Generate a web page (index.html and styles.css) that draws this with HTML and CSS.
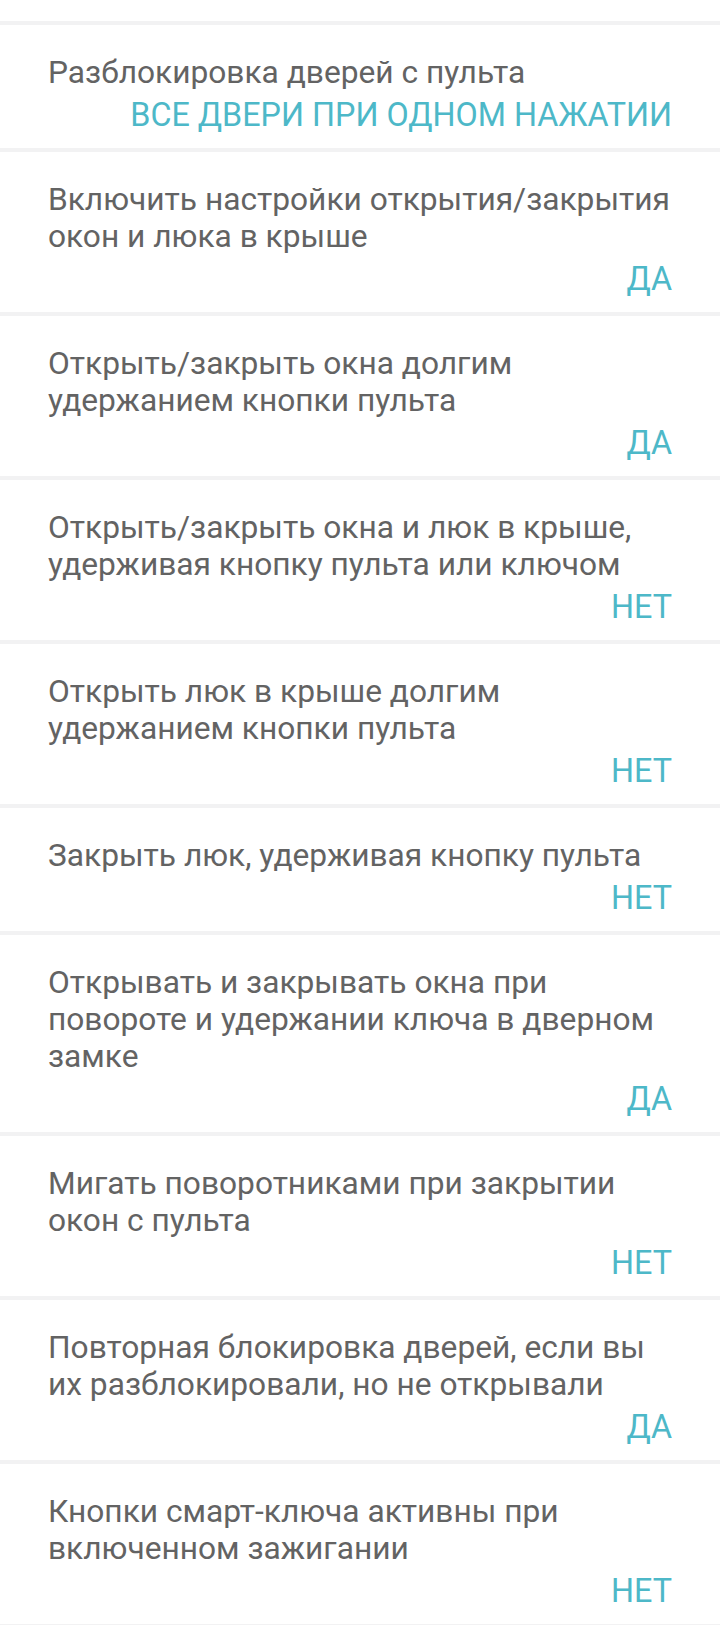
FILE: index.html
```html
<!DOCTYPE html>
<html lang="ru">
<head>
  <meta charset="UTF-8">
  <title>Настройки дверей и окон</title>
  <link rel="stylesheet" href="styles.css">
</head>
<body>

<main class="settings">
  <div class="row-tail"></div>

  <div class="setting">
    <div class="setting-title">Разблокировка дверей с пульта</div>
    <div class="setting-value">ВСЕ ДВЕРИ ПРИ ОДНОМ НАЖАТИИ</div>
  </div>

  <div class="setting">
    <div class="setting-title">Включить настройки открытия/закрытия окон и люка в крыше</div>
    <div class="setting-value">ДА</div>
  </div>

  <div class="setting">
    <div class="setting-title">Открыть/закрыть окна долгим удержанием кнопки пульта</div>
    <div class="setting-value">ДА</div>
  </div>

  <div class="setting">
    <div class="setting-title">Открыть/закрыть окна и люк в крыше, удерживая кнопку пульта или ключом</div>
    <div class="setting-value">НЕТ</div>
  </div>

  <div class="setting">
    <div class="setting-title">Открыть люк в крыше долгим удержанием кнопки пульта</div>
    <div class="setting-value">НЕТ</div>
  </div>

  <div class="setting">
    <div class="setting-title">Закрыть люк, удерживая кнопку пульта</div>
    <div class="setting-value">НЕТ</div>
  </div>

  <div class="setting">
    <div class="setting-title">Открывать и закрывать окна при повороте и удержании ключа в дверном замке</div>
    <div class="setting-value">ДА</div>
  </div>

  <div class="setting">
    <div class="setting-title">Мигать поворотниками при закрытии окон с пульта</div>
    <div class="setting-value">НЕТ</div>
  </div>

  <div class="setting">
    <div class="setting-title">Повторная блокировка дверей, если вы их разблокировали, но не открывали</div>
    <div class="setting-value">ДА</div>
  </div>

  <div class="setting">
    <div class="setting-title">Кнопки смарт-ключа активны при включенном зажигании</div>
    <div class="setting-value">НЕТ</div>
  </div>
</main>

</body>
</html>
```

FILE: styles.css
```css
body {
  margin: 0;
  padding: 0;
  background: #f2f2f3;
  font-family: Roboto, 'Noto Sans', sans-serif;
}
.settings {
  display: flex;
  flex-direction: column;
  gap: 4px;
  padding-bottom: 4px;
}
.row-tail {
  height: 21px;
  background: #fff;
}
.setting {
  background: #fff;
  padding: 29px 48px 14px 48px;
  display: flex;
  flex-direction: column;
}
.setting-title {
  font-size: 31.7px;
  line-height: 37px;
  color: #636363;
  padding-right: 2px;
}
.setting-value {
  align-self: flex-end;
  font-size: 32.3px;
  line-height: 37px;
  color: #4db8c8;
  margin-top: 6px;
}
```
